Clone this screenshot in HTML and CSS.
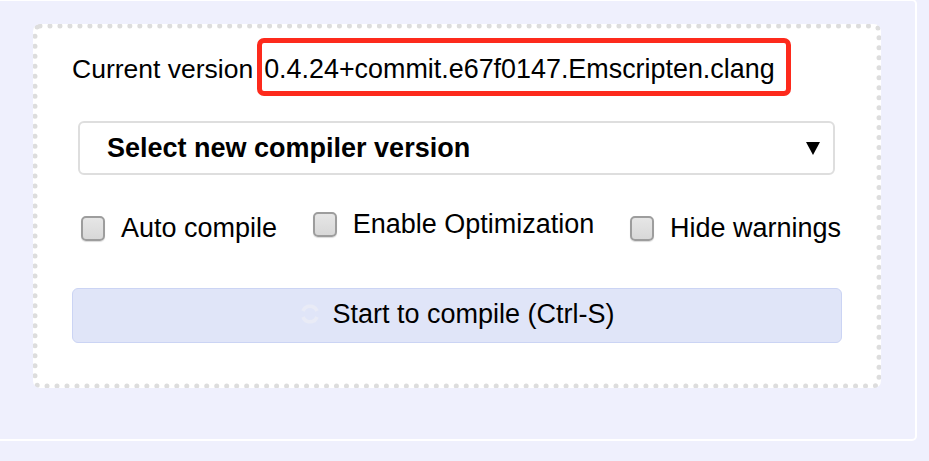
FILE: index.html
```html
<!DOCTYPE html>
<html lang="en">
<head>
<meta charset="utf-8">
<title>Compiler</title>
<link rel="stylesheet" href="styles.css">
</head>
<body>
<div class="panel">
  <div class="card">
    <div class="version-row">
      <span class="version-label">Current version</span>
      <span class="version-value">0.4.24+commit.e67f0147.Emscripten.clang</span>
    </div>
    <div class="select">
      <span class="select-text">Select new compiler version</span>
      <svg class="select-arrow" width="14" height="13" viewBox="0 0 14 13"><polygon points="0,0 14,0 7,13" fill="#000"/></svg>
    </div>
    <div class="options">
      <label class="opt"><span class="box"></span><span class="opt-text">Auto compile</span></label>
      <label class="opt opt--raised"><span class="box"></span><span class="opt-text">Enable Optimization</span></label>
      <label class="opt"><span class="box"></span><span class="opt-text">Hide warnings</span></label>
    </div>
    <div class="compile-btn">
      <svg class="spin" width="22" height="22" viewBox="0 0 22 22"><path d="M4 8 A7.5 7.5 0 0 1 18 8" fill="none" stroke="#e9ebf6" stroke-width="3.5"/><path d="M18 14 A7.5 7.5 0 0 1 4 14" fill="none" stroke="#e9ebf6" stroke-width="3.5"/></svg>
      <span>Start to compile (Ctrl-S)</span>
    </div>
  </div>
</div>
</body>
</html>
```
FILE: styles.css
```css
html, body {
  margin: 0;
  padding: 0;
}
body {
  background: #eff0fd;
  font-family: "Liberation Sans", Arial, sans-serif;
  font-size: 27px;
  color: #000;
  overflow: hidden;
  width: 929px;
  height: 461px;
}
.panel {
  box-sizing: border-box;
  width: 937px;
  margin-left: -20px;
  margin-top: -1px;
  border: 2px solid #ffffff;
  border-radius: 5px;
  padding: 23px 34px 51px 51px;
  background: #eff0fd;
}
.card {
  background: #fff;
  border: 5px dotted #dddddd;
  border-radius: 7px;
  padding: 9px 34px 40px 34px;
  display: flex;
  flex-direction: column;
}
.version-row {
  display: flex;
  align-items: baseline;
  white-space: nowrap;
  font-size: 26.5px;
}
.version-value {
  margin-left: 4px;
  border: 5px solid #fd2a1c;
  border-radius: 7px;
  padding: 11px 11px 6px 2px;
  font-size: 26.9px;
}
.select {
  margin: 25px 7px 0 6px;
  height: 54px;
  box-sizing: border-box;
  border: 2px solid #dedede;
  border-radius: 6px;
  display: flex;
  align-items: center;
  justify-content: space-between;
  padding: 0 13px 0 27px;
}
.select-text {
  font-weight: bold;
}
.select-arrow {
  display: block;
}
.options {
  display: flex;
  justify-content: space-between;
  align-items: flex-start;
  margin: 38px 1px 0 9px;
}
.opt {
  display: flex;
  align-items: center;
  gap: 16px;
}
.opt--raised {
  margin-top: -4px;
}
.box {
  width: 24px;
  height: 25px;
  box-sizing: border-box;
  border: 2px solid #9d9d9d;
  border-radius: 5px;
  background: linear-gradient(#e6e6e6, #d8d8d8);
  box-shadow: 0 1px 1px rgba(0,0,0,0.15);
}
.compile-btn {
  margin-top: 44px;
  height: 55px;
  box-sizing: border-box;
  background: #e0e5f8;
  border: 1px solid #cbd4f4;
  border-radius: 6px;
  display: flex;
  align-items: center;
  justify-content: center;
  gap: 11px;
  padding-bottom: 3px;
}
.spin {
  display: block;
}
```
